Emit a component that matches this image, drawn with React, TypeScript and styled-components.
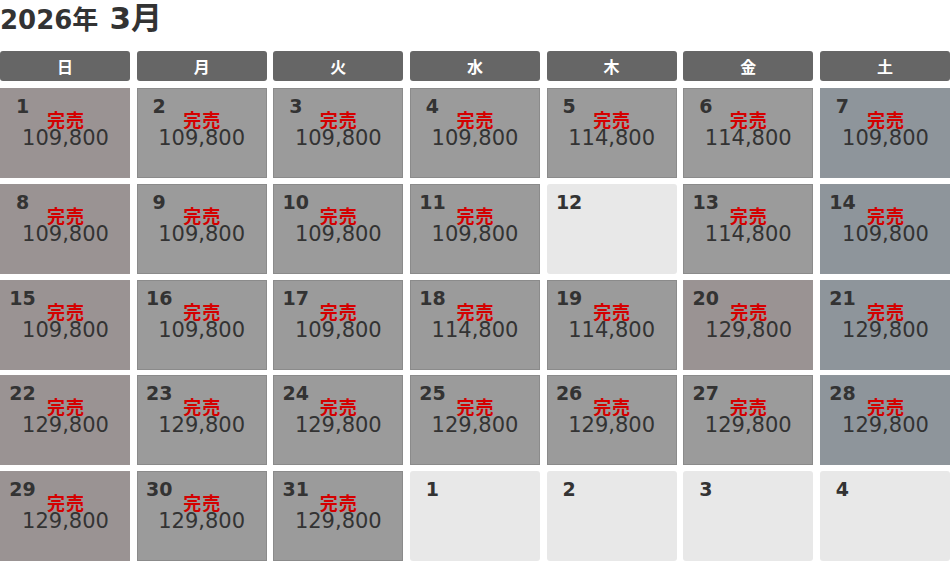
import React from "react";
import styled, { createGlobalStyle } from "styled-components";

const Global = createGlobalStyle`
  html, body { margin: 0; padding: 0; background: #fff; }
  body { font-family: "DejaVu Sans", "Noto Sans CJK JP", sans-serif; color: #333; }
`;

const Page = styled.div`
  width: 950px;
`;

const Title = styled.h1`
  margin: 0;
  height: 51px;
  font-size: 26px;
  line-height: 37px;
  font-weight: bold;
  color: #333;
  font-family: "DejaVu Sans", "Noto Sans CJK JP", sans-serif;
  white-space: nowrap;
`;

const Month = styled.span`
  font-size: 31px;
  margin-left: 2px;
`;

const HeadRow = styled.div`
  display: grid;
  grid-template-columns: repeat(7, 130px);
  justify-content: space-between;
  margin-bottom: 7px;
`;

const HeadCell = styled.div`
  height: 30px;
  background: #666;
  border-radius: 3px;
  color: #fff;
  font-family: "Noto Sans CJK JP", sans-serif;
  font-weight: bold;
  font-size: 16px;
  line-height: 30px;
  text-align: center;
`;

const Body = styled.div`
  display: grid;
  grid-template-columns: repeat(7, 130px);
  grid-auto-rows: 90px;
  justify-content: space-between;
  row-gap: 5.75px;
`;

type Kind = "sun" | "sat" | "week" | "empty";

const bg: Record<Kind, string> = {
  sun: "#9a9393",
  sat: "#8e959b",
  week: "#9b9b9b",
  empty: "#e8e8e8",
};

const Cell = styled.div<{ $kind: Kind }>`
  box-sizing: border-box;
  background: ${(p) => bg[p.$kind]};
  border: ${(p) => (p.$kind === "week" ? "1px solid #8b8b8b" : "none")};
  border-radius: ${(p) => (p.$kind === "empty" ? "3px" : "0")};
  display: flex;
  flex-direction: column;
  align-items: center;
  padding-top: ${(p) => (p.$kind === "week" ? "8px" : "9px")};
  padding-left: ${(p) => (p.$kind === "week" ? "0" : "1px")};
`;

const DayNum = styled.div`
  align-self: flex-start;
  width: 43px;
  height: 13px;
  text-align: center;
  font-size: 19px;
  line-height: 19px;
  font-weight: bold;
  color: #333;
`;

const Sold = styled.div`
  font-family: "Noto Sans CJK JP", sans-serif;
  font-weight: bold;
  font-size: 18px;
  line-height: 18px;
  letter-spacing: 1px;
  margin-right: -1px;
  color: #d40000;
`;

const Price = styled.div`
  font-size: 21px;
  line-height: 21px;
  color: #333;
`;

type Day = { d: number; kind: Kind; price?: string };

const P1 = "109,800";
const P2 = "114,800";
const P3 = "129,800";

const days: Day[] = [
  { d: 1, kind: "sun", price: P1 },
  { d: 2, kind: "week", price: P1 },
  { d: 3, kind: "week", price: P1 },
  { d: 4, kind: "week", price: P1 },
  { d: 5, kind: "week", price: P2 },
  { d: 6, kind: "week", price: P2 },
  { d: 7, kind: "sat", price: P1 },
  { d: 8, kind: "sun", price: P1 },
  { d: 9, kind: "week", price: P1 },
  { d: 10, kind: "week", price: P1 },
  { d: 11, kind: "week", price: P1 },
  { d: 12, kind: "empty" },
  { d: 13, kind: "week", price: P2 },
  { d: 14, kind: "sat", price: P1 },
  { d: 15, kind: "sun", price: P1 },
  { d: 16, kind: "week", price: P1 },
  { d: 17, kind: "week", price: P1 },
  { d: 18, kind: "week", price: P2 },
  { d: 19, kind: "week", price: P2 },
  { d: 20, kind: "sun", price: P3 },
  { d: 21, kind: "sat", price: P3 },
  { d: 22, kind: "sun", price: P3 },
  { d: 23, kind: "week", price: P3 },
  { d: 24, kind: "week", price: P3 },
  { d: 25, kind: "week", price: P3 },
  { d: 26, kind: "week", price: P3 },
  { d: 27, kind: "week", price: P3 },
  { d: 28, kind: "sat", price: P3 },
  { d: 29, kind: "sun", price: P3 },
  { d: 30, kind: "week", price: P3 },
  { d: 31, kind: "week", price: P3 },
  { d: 1, kind: "empty" },
  { d: 2, kind: "empty" },
  { d: 3, kind: "empty" },
  { d: 4, kind: "empty" },
];

const weekdays = ["日", "月", "火", "水", "木", "金", "土"];

export default function App() {
  return (
    <Page>
      <Global />
      <Title>
        2026年 <Month>3月</Month>
      </Title>
      <HeadRow>
        {weekdays.map((w) => (
          <HeadCell key={w}>{w}</HeadCell>
        ))}
      </HeadRow>
      <Body>
        {days.map((day, i) => (
          <Cell key={i} $kind={day.kind}>
            <DayNum>{day.d}</DayNum>
            {day.price && (
              <>
                <Sold>完売</Sold>
                <Price>{day.price}</Price>
              </>
            )}
          </Cell>
        ))}
      </Body>
    </Page>
  );
}
